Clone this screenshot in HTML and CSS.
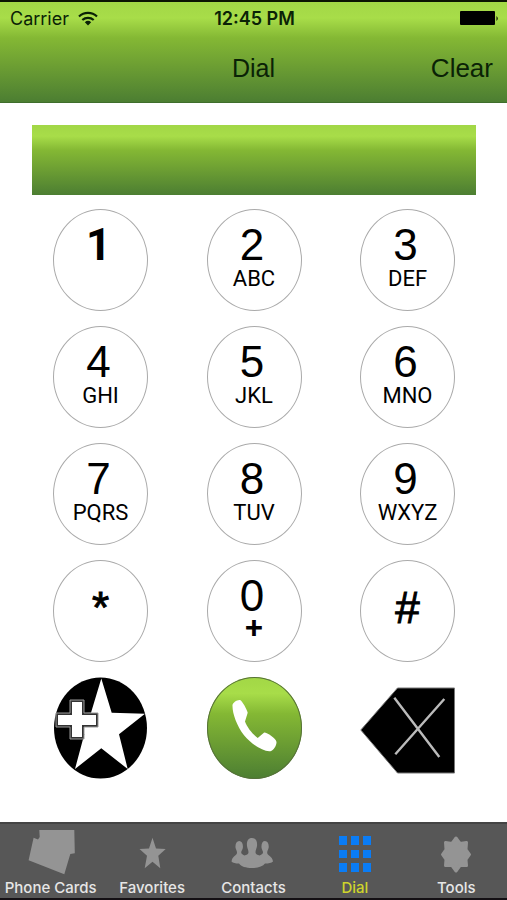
FILE: index.html
```html
<!DOCTYPE html>
<html lang="en">

<head>
    <meta charset="UTF-8">
    <meta name="viewport" content="width=device-width, initial-scale=1.0">
    <title>Dial</title>
    <link rel="stylesheet" href="styles.css">
</head>

<body>
    <header class="header">
        <div class="status-bar">
            <div class="carrier">
                <span>Carrier</span>
                <svg class="wifi" viewBox="0 0 20 15" aria-hidden="true">
                    <path d="M1 5.5a13 13 0 0 1 18 0M4.3 9a8.5 8.5 0 0 1 11.4 0" fill="none" stroke="currentColor" stroke-width="2.2" />
                    <path d="M6.8 11.2a5 5 0 0 1 6.4 0L10 14.5z" fill="currentColor" />
                </svg>
            </div>
            <div class="time">12:45 PM</div>
            <div class="battery">
                <svg viewBox="0 0 40 15" aria-hidden="true">
                    <rect x="1" y="0" width="35" height="14" rx="1" />
                    <path d="M37.5 5q2.5 2.5 0 5z" />
                </svg>
            </div>
        </div>
        <div class="nav-bar">
            <h1>Dial</h1>
            <button class="clear" id="clear">Clear</button>
        </div>
    </header>

    <main class="dialer">
        <input type="tel" id="number" class="display" aria-label="Phone number">

        <div class="keypad">
            <button class="key"><span class="digit bold">1</span></button>
            <button class="key"><span class="digit">2</span><span class="letters">ABC</span></button>
            <button class="key"><span class="digit">3</span><span class="letters">DEF</span></button>
            <button class="key"><span class="digit">4</span><span class="letters">GHI</span></button>
            <button class="key"><span class="digit">5</span><span class="letters">JKL</span></button>
            <button class="key"><span class="digit">6</span><span class="letters">MNO</span></button>
            <button class="key"><span class="digit">7</span><span class="letters">PQRS</span></button>
            <button class="key"><span class="digit">8</span><span class="letters">TUV</span></button>
            <button class="key"><span class="digit">9</span><span class="letters">WXYZ</span></button>
            <button class="key symbol"><span class="digit">*</span></button>
            <button class="key"><span class="digit">0</span><span class="letters plus">+</span></button>
            <button class="key symbol"><span class="digit">#</span></button>

            <button class="action" aria-label="Add to favorites">
                <svg viewBox="0 0 95 102">
                    <ellipse cx="47.5" cy="51" rx="46.500" ry="50.5" />
                    <path fill="#fff" d="M48.3 1.5 58.7 35.7 92 36.7 66 57.3 74.7 92 48.3 71.3 22 92 31.3 57.3 4 36.7 38 35.7z" />
                    <path fill="#fff" stroke="#333" stroke-width="2" d="M18 24h12v13h14v12H30v12H18V49H4V37h14z" />
                    <path fill="none" stroke="#999" stroke-width="1" d="M17 23h14v13h14v14H31v12H17V50H3V36h14z" />
                </svg>
            </button>
            <button class="action call" aria-label="Call">
                <svg viewBox="0 0 95 102">
                    <path fill="#fff" d="M25.5 29c-.5-3 4.5-6.500 7.5-6 2 .5 7 9.500 7.700 12.700L38 44.500c2 6 8 13 12.700 16.500l6.500-5.500c3 0 12 6 12.300 9.500.2 3.500-3 8.500-6 9.200-7 1-19-7-26.500-16C30 49 25.500 37 25.500 29z" />
                </svg>
            </button>
            <button class="action" aria-label="Delete">
                <svg viewBox="0 0 95 102">
                    <path stroke="#777" stroke-width="1" d="M.8 53 37.5 11H94.500V96H37.500z" />
                    <path fill="none" stroke="#bbb" stroke-width="2.4" d="M34.3 20.700 79.300 80M84.300 22 35.300 77.300" />
                </svg>
            </button>
        </div>
    </main>

    <nav class="tab-bar">
        <a href="#" class="tab">
            <svg viewBox="0 0 48 48"><path d="M12.3 1H47.300L47.800 24.300 43.300 25 37.300 45.300 1.600 31.300 6.600 8.700 11 10.500 12.700 8z" /></svg>
            <span>Phone Cards</span>
        </a>
        <a href="#" class="tab">
            <svg viewBox="0 0 48 48"><path d="M24.5 8.700 28 19.500 37.700 20 30.300 26.700 32.300 39.300 24.500 32.700 16.700 39.300 19 26.700 11.500 20 21 19.500z" /></svg>
            <span>Favorites</span>
        </a>
        <a href="#" class="tab">
            <svg viewBox="0 0 48 48">
                <path d="M23 9c4 0 5.500 3.500 5 8-.3 2.500-1.500 4-1.500 6.500 0 1.500 2 2.500 4 3 1.500-.8 3.500-1.500 3.500-3 0-1.500-1.300-3-1.500-5-.3-4 1-6.500 3.500-6.500s4 2.500 3.700 6.500c-.2 2-1.700 3.500-1.500 5.500.3 3 5.300 3 5.800 8.500-1.500 1.500-4.500 2-8 2-2 3-7 4.500-13 4.500S12 37.500 10 34.500c-3.500 0-6-.5-7.500-2 .5-5.500 5-5.500 5.500-8.500.2-2-1.300-3.500-1.500-5.500-.3-4 1.200-6.500 3.700-6.500s4 2.500 3.700 6.500c-.2 2-1.700 3.500-1.700 5 0 1.500 2 2.200 3.300 3 2-.5 4-1.500 4-3 0-2.500-1.200-4-1.500-6.500C17.500 12.500 19 9 23 9z" />
            </svg>
            <span>Contacts</span>
        </a>
        <a href="#" class="tab active">
            <svg viewBox="0 0 48 48"><path d="M8 7h8v9H8zM20 7h8v9h-8zM32 7h8v9h-8zM8 21h8v8H8zM20 21h8v8h-8zM32 21h8v8h-8zM8 34h8v9H8zM20 34h8v9h-8zM32 34h8v9h-8z" /></svg>
            <span>Dial</span>
        </a>
        <a href="#" class="tab">
            <svg viewBox="0 0 48 48">
                <path stroke="currentColor" stroke-width="3" stroke-linejoin="round" d="M24 9 28 14.500 34.500 13.500 34 20.500 37.500 25.500 34 30.500 34.500 36.500 28 36.500 24 42 20 36.500 13.500 36.500 14 30.500 10.500 25.500 14 20.500 13.500 13.500 20 14.500z" />
            </svg>
            <span>Tools</span>
        </a>
    </nav>

    <script>
        const number = document.getElementById('number');

        document.getElementById('clear').addEventListener('click', function () {
            number.value = '';
        });

        document.querySelectorAll('.key').forEach(key => {
            key.addEventListener('click', function () {
                number.value += key.querySelector('.digit').textContent;
            });
        });

        document.querySelector('[aria-label="Delete"]').addEventListener('click', function () {
            number.value = number.value.slice(0, -1);
        });
    </script>
</body>

</html>
```
FILE: styles.css
```css
:root {
    --green: linear-gradient(#a2d746 0%, #a8dd49 16%, #84b834 36%, #6ea033 62%, #4c7e32 100%);
}

* {
    box-sizing: border-box;
    margin: 0;
    padding: 0;
}

body {
    background-color: #fff;
    color: #000;
    display: flex;
    flex-direction: column;
    min-height: 100vh;
    font-family: 'Liberation Sans', Arial, sans-serif;
}

button {
    background: none;
    border: none;
    color: inherit;
    font-family: inherit;
    cursor: pointer;
}

.header {
    background: var(--green);
    border-top: 2px solid #0b1403;
    border-bottom: 1px solid #3f6e2c;
    color: #0a2206;
}

.status-bar {
    display: grid;
    grid-template-columns: 1fr auto 1fr;
    align-items: center;
    height: 32px;
    padding: 0 8px 0 10px;
    font-family: Inter, sans-serif;
    font-size: 18px;
}

.carrier {
    display: flex;
    align-items: center;
    gap: 9px;
}

.wifi {
    width: 20px;
    height: 15px;
}

.time {
    font-weight: 600;
}

.battery {
    display: flex;
    justify-content: flex-end;
}

.battery svg {
    width: 40px;
    height: 15px;
}

.nav-bar {
    display: grid;
    grid-template-columns: 1fr auto 1fr;
    align-items: center;
    height: 68px;
    padding: 0 14px;
}

.nav-bar h1 {
    grid-column: 2;
    font-size: 25px;
    font-weight: normal;
}

.clear {
    justify-self: end;
    font-size: 26px;
}

.dialer {
    padding: 22px 31px 24px 32px;
}

.display {
    display: block;
    width: 100%;
    height: 70px;
    padding: 0 16px;
    background: var(--green);
    border: none;
    border-radius: 0;
    font-size: 36px;
    text-align: center;
}

.keypad {
    display: grid;
    grid-template-columns: repeat(3, 95px);
    justify-content: space-between;
    row-gap: 15px;
    padding: 14px 21px 0;
}

.key,
.action {
    display: flex;
    flex-direction: column;
    align-items: center;
    height: 102px;
}

.key {
    padding-top: 13px;
    border: 1px solid #aaa;
    border-radius: 50%;
}

.digit {
    margin-right: 4px;
    font-size: 44px;
    line-height: 44px;
}

.bold {
    font-family: Roboto, sans-serif;
    font-weight: bold;
}

.symbol {
    padding-top: 25px;
}

.symbol .digit {
    margin-right: 0;
    -webkit-text-stroke: 1px #000;
}

.letters {
    font-family: Roboto, sans-serif;
    font-size: 22px;
    line-height: 24px;
}

.plus {
    font-size: 30px;
    line-height: 20px;
    -webkit-text-stroke: 1px #000;
}

.action svg {
    width: 95px;
    height: 102px;
}

.call {
    background: var(--green);
    border-radius: 50%;
    box-shadow: inset 0 0 0 1px #56703a;
}

.tab-bar {
    display: grid;
    grid-template-columns: repeat(5, 1fr);
    margin-top: auto;
    padding-top: 5px;
    background-color: #575757;
    border-top: 2px solid #444;
    border-bottom: 2px solid #141014;
}

.tab {
    display: flex;
    flex-direction: column;
    align-items: center;
    color: #949494;
    text-decoration: none;
    white-space: nowrap;
    font-family: Inter, sans-serif;
    font-size: 15px;
    font-weight: 500;
    line-height: 21px;
}

.tab svg {
    width: 48px;
    height: 48px;
    fill: currentColor;
}

.tab span {
    color: #e6e6e6;
}

.active {
    color: #0a7cf5;
}

.active span {
    color: #ced42c;
}
```
